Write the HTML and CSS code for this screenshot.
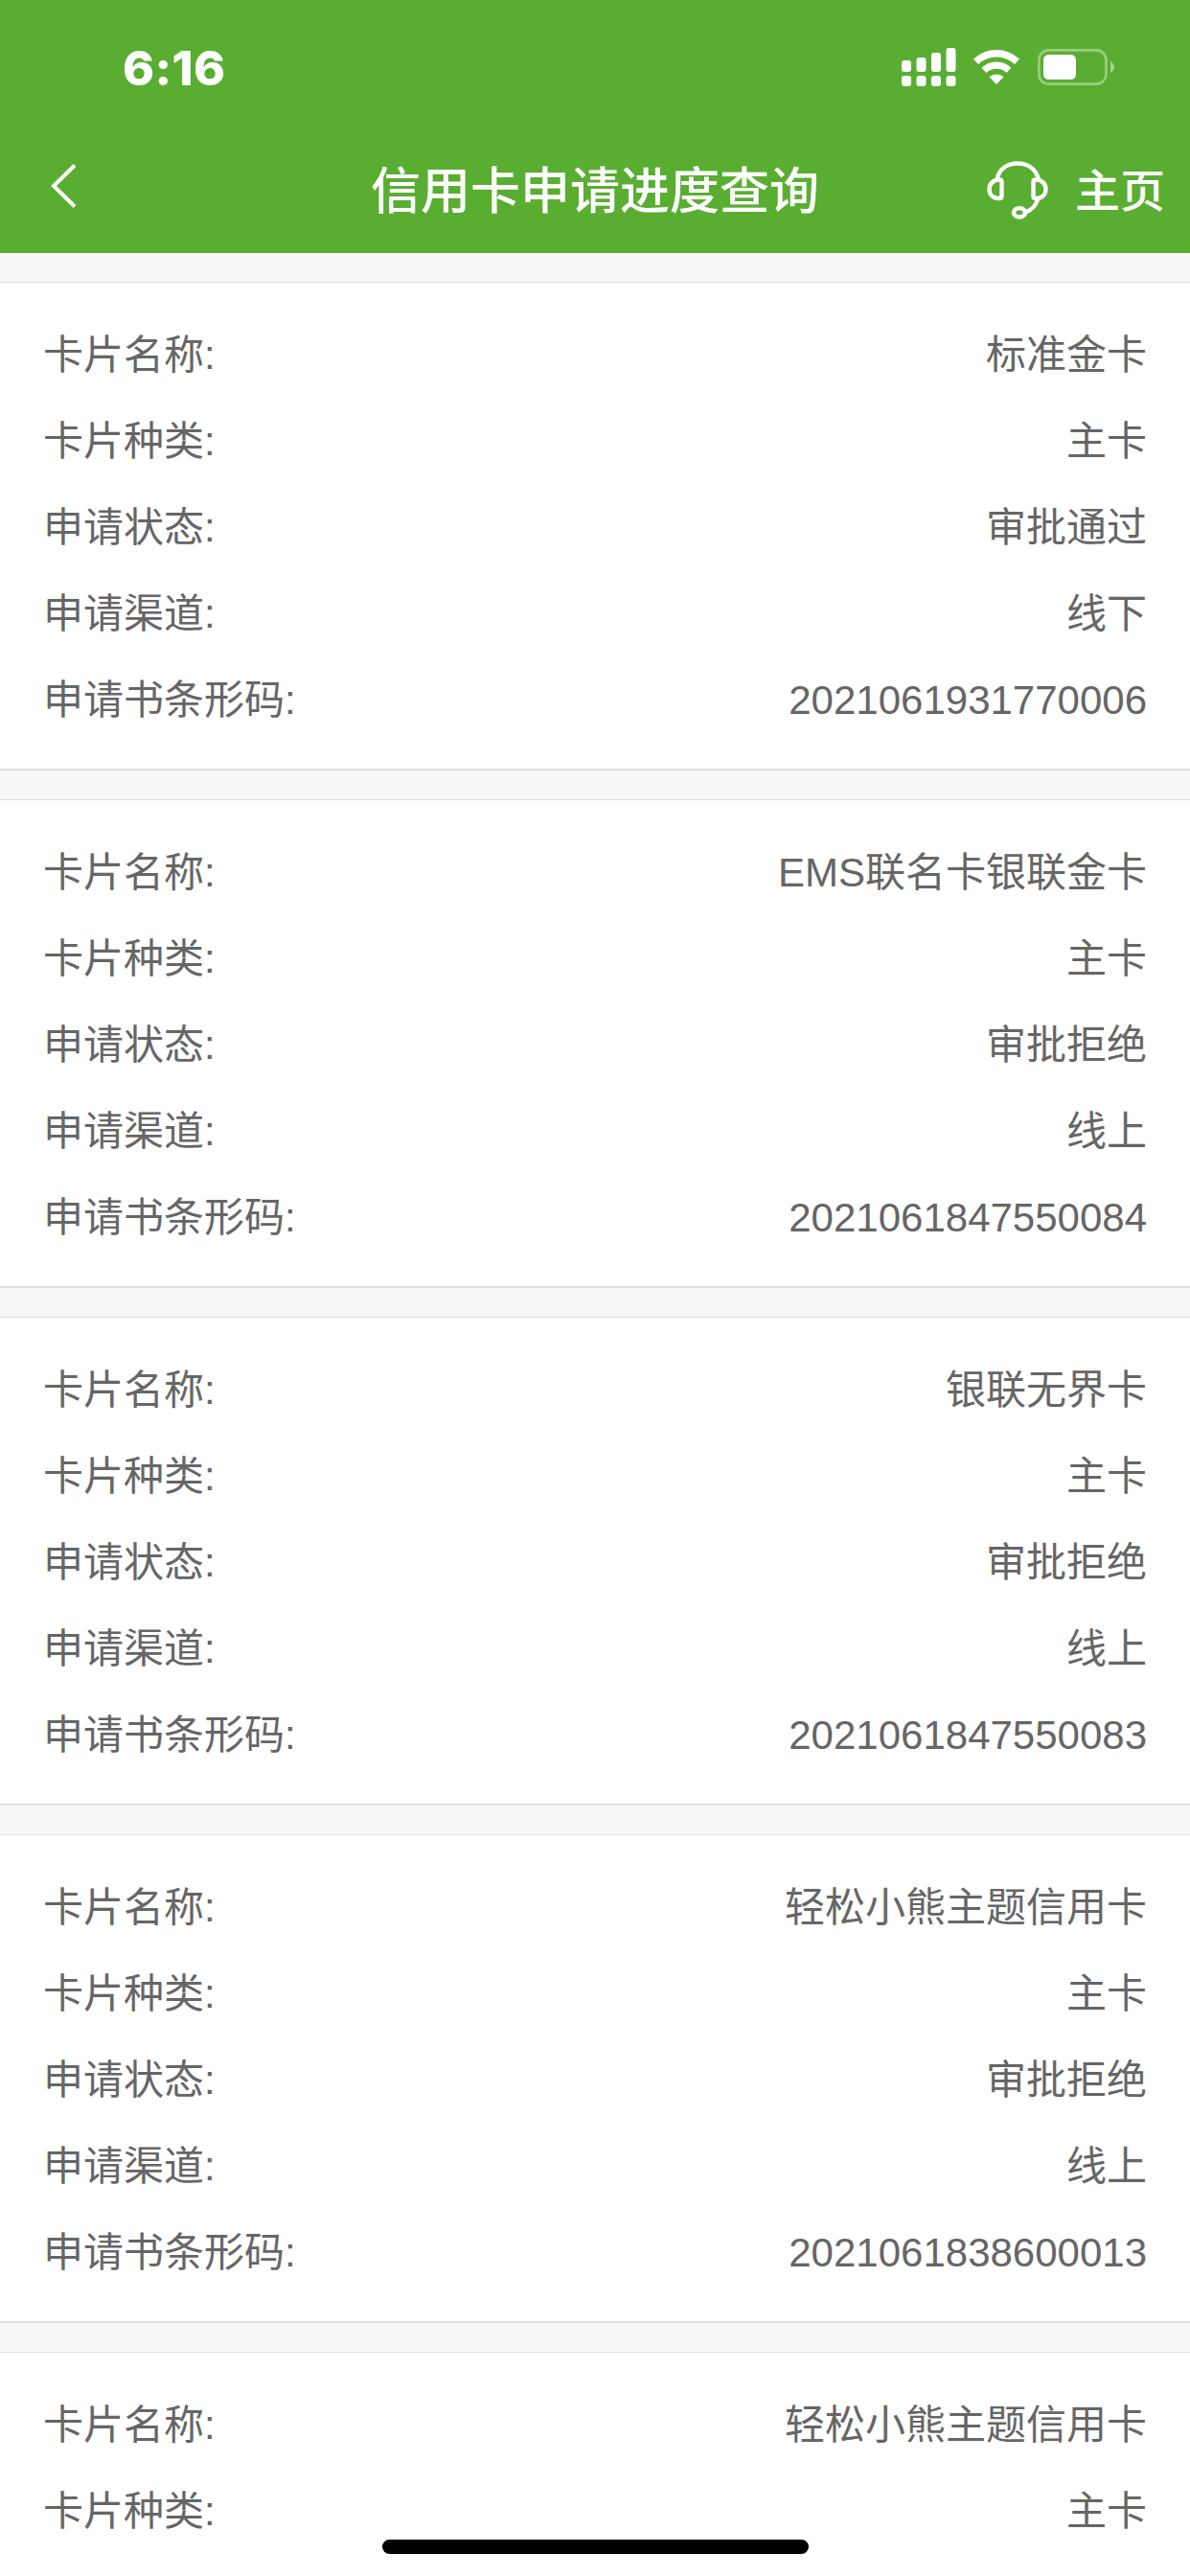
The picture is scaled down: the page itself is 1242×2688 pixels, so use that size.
FILE: index.html
```html
<!DOCTYPE html>
<html lang="zh-CN">

<head>
    <meta charset="UTF-8">
    <meta name="viewport" content="width=device-width, initial-scale=1.0">
    <title>信用卡申请进度查询</title>
    <link rel="stylesheet" href="styles.css">
</head>

<body>
    <header class="header">
        <div class="status-bar">
            <span class="time">6:16</span>
            <div class="status-icons">
                <svg class="signal" width="57" height="40" viewBox="0 0 57 40" fill="#fff">
                    <rect x="0" y="13" width="10" height="12" rx="3" />
                    <rect x="15.5" y="10" width="10" height="15" rx="3" />
                    <rect x="31" y="5" width="10" height="20" rx="3" />
                    <rect x="46.5" y="0" width="10" height="25" rx="3" />
                    <rect x="0" y="29" width="10" height="11" rx="3" />
                    <rect x="15.5" y="29" width="10" height="11" rx="3" />
                    <rect x="31" y="29" width="10" height="11" rx="3" />
                    <rect x="46.5" y="29" width="10" height="11" rx="3" />
                </svg>
                <svg class="wifi" width="48" height="36" viewBox="0 0 48 36">
                    <path d="M2.5 12.4 A31 31 0 0 1 45.5 12.4" fill="none" stroke="#fff" stroke-width="7.4" />
                    <path d="M11 21.3 A19 19 0 0 1 37 21.3" fill="none" stroke="#fff" stroke-width="7.2" />
                    <path d="M16.5 28.3 A11.5 11.5 0 0 1 31.5 28.3 L25 35 Q24 36 23 35 Z" fill="#fff" />
                </svg>
                <svg class="battery" width="80" height="38" viewBox="0 0 80 38">
                    <rect x="1.4" y="1.4" width="70" height="35.2" rx="10" fill="none" stroke="#fff" stroke-opacity=".4" stroke-width="2.6" />
                    <rect x="6" y="6" width="34" height="26" rx="5.5" fill="#fff" />
                    <path d="M76 13 Q80 15 80 19 Q80 23 76 25 Z" fill="#fff" fill-opacity=".45" />
                </svg>
            </div>
        </div>
        <nav class="nav-bar">
            <a class="back">
                <svg width="28" height="48" viewBox="0 0 28 48">
                    <path d="M25 2.5 L3 24 L25 45.5" fill="none" stroke="#fff" stroke-width="4" />
                </svg>
            </a>
            <h1 class="title">信用卡申请进度查询</h1>
            <div class="nav-right">
                <svg class="service" width="64" height="62" viewBox="0 0 64 62" fill="none" stroke="#fff" stroke-width="4.4">
                    <path d="M10.5 20 C13 9.5 21 3.5 32 3.5 C43 3.5 51 9.5 54 20" />
                    <path d="M15.5 22.5 Q15.5 20.5 13 20.5 C6 20.5 2.5 25.5 2.5 30.5 C2.5 35.5 6 40 13 40 Q15.5 40 15.5 38 Z" />
                    <path d="M48.5 22.5 Q48.5 20.5 51 20.5 C58 20.5 61.5 25.5 61.5 30.5 C61.5 35.5 58 40 51 40 Q48.5 40 48.5 38 Z" />
                    <path d="M53.5 40 C51.5 47 47 52 40.5 54.5" />
                    <ellipse cx="34" cy="54.8" rx="6" ry="4.7" />
                </svg>
                <a class="home">主页</a>
            </div>
        </nav>
    </header>

    <main class="list">
        <section class="card">
            <div class="row"><span>卡片名称:</span><span>标准金卡</span></div>
            <div class="row"><span>卡片种类:</span><span>主卡</span></div>
            <div class="row"><span>申请状态:</span><span>审批通过</span></div>
            <div class="row"><span>申请渠道:</span><span>线下</span></div>
            <div class="row"><span>申请书条形码:</span><span>2021061931770006</span></div>
        </section>
        <section class="card">
            <div class="row"><span>卡片名称:</span><span>EMS联名卡银联金卡</span></div>
            <div class="row"><span>卡片种类:</span><span>主卡</span></div>
            <div class="row"><span>申请状态:</span><span>审批拒绝</span></div>
            <div class="row"><span>申请渠道:</span><span>线上</span></div>
            <div class="row"><span>申请书条形码:</span><span>2021061847550084</span></div>
        </section>
        <section class="card">
            <div class="row"><span>卡片名称:</span><span>银联无界卡</span></div>
            <div class="row"><span>卡片种类:</span><span>主卡</span></div>
            <div class="row"><span>申请状态:</span><span>审批拒绝</span></div>
            <div class="row"><span>申请渠道:</span><span>线上</span></div>
            <div class="row"><span>申请书条形码:</span><span>2021061847550083</span></div>
        </section>
        <section class="card">
            <div class="row"><span>卡片名称:</span><span>轻松小熊主题信用卡</span></div>
            <div class="row"><span>卡片种类:</span><span>主卡</span></div>
            <div class="row"><span>申请状态:</span><span>审批拒绝</span></div>
            <div class="row"><span>申请渠道:</span><span>线上</span></div>
            <div class="row"><span>申请书条形码:</span><span>2021061838600013</span></div>
        </section>
        <section class="card card-last">
            <div class="row"><span>卡片名称:</span><span>轻松小熊主题信用卡</span></div>
            <div class="row"><span>卡片种类:</span><span>主卡</span></div>
        </section>
    </main>

    <div class="home-indicator"></div>
</body>

</html>
```

FILE: styles.css
```css
* {
    box-sizing: border-box;
}

body {
    margin: 0;
    height: 2688px;
    overflow: hidden;
    background: #f7f7f7;
    color: #666;
    font-family: "Liberation Sans", "Noto Sans CJK SC", sans-serif;
    font-size: 42px;
}

.header {
    height: 264px;
    background: #59ae32;
    color: #fff;
}

/* status bar */
.status-bar {
    display: flex;
    justify-content: space-between;
    height: 132px;
    padding: 41px 79px 0 128px;
}

.time {
    font-family: Inter, sans-serif;
    font-size: 50px;
    font-weight: 800;
    line-height: 60px;
    letter-spacing: 0.4px;
}

.status-icons {
    display: flex;
    align-items: flex-start;
    padding-top: 9px;
}

.wifi {
    margin: 2px 0 0 18px;
}

.battery {
    margin: 1px 0 0 19px;
}

/* navigation bar */
.nav-bar {
    display: grid;
    grid-template-columns: 303px 1fr 330px;
    align-items: center;
    height: 132px;
    padding: 0 26px 0 53px;
}

.back svg {
    display: block;
    margin-top: -8px;
}

.title {
    margin: 0;
    padding-top: 4px;
    font-size: 52px;
    font-weight: 500;
    line-height: 76px;
    text-align: center;
    white-space: nowrap;
}

.nav-right {
    display: flex;
    align-items: center;
    justify-content: flex-end;
    gap: 28px;
}

.home {
    padding-top: 3px;
    font-size: 47px;
    font-weight: 500;
    line-height: 70px;
}

/* application records */
.card {
    height: 510px;
    margin-top: 30px;
    padding: 31px 45px 0;
    background: #fff;
    border-top: 1px solid #dedede;
    border-bottom: 2px solid #dedede;
}

.card-last {
    height: 234px;
    border-bottom: none;
}

.row {
    display: flex;
    justify-content: space-between;
    height: 90px;
    line-height: 90px;
    white-space: nowrap;
}

.home-indicator {
    position: fixed;
    bottom: 23px;
    left: 399px;
    width: 445px;
    height: 15px;
    border-radius: 8px;
    background: #000;
}
```
